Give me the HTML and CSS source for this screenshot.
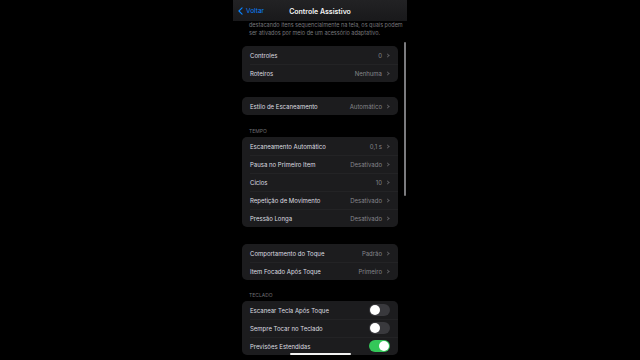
FILE: index.html
```html
<!DOCTYPE html>
<html lang="pt-BR">
  <head>
    <meta charset="UTF-8" />
    <meta name="viewport" content="width=device-width, initial-scale=1.0" />
    <title>Controle Assistivo</title>
    <link rel="stylesheet" href="styles.css">
  </head>
  <body>
    <div class="phone">
      <div class="navbar">
        <a class="back">
          <svg class="back-icon" viewBox="0 0 6 10" width="5" height="8">
            <path d="M5 1 L1 5 L5 9" fill="none" stroke="#0a84ff" stroke-width="1.4" stroke-linecap="round" stroke-linejoin="round" />
          </svg>
          Voltar
        </a>
        <div class="title">Controle Assistivo</div>
      </div>

      <div class="content">
        <p class="intro">
          destacando itens sequencialmente na tela, os quais podem<br />
          ser ativados por meio de um acessório adaptativo.
        </p>

        <div class="card first">
          <div class="row"><span class="label">Controles</span><span class="value">0</span><span class="chev"></span></div>
          <div class="row"><span class="label">Roteiros</span><span class="value">Nenhuma</span><span class="chev"></span></div>
        </div>

        <div class="card spaced">
          <div class="row"><span class="label">Estilo de Escaneamento</span><span class="value">Automático</span><span class="chev"></span></div>
        </div>

        <div class="section">TEMPO</div>
        <div class="card">
          <div class="row"><span class="label">Escaneamento Automático</span><span class="value">0,1 s</span><span class="chev"></span></div>
          <div class="row"><span class="label">Pausa no Primeiro Item</span><span class="value">Desativado</span><span class="chev"></span></div>
          <div class="row"><span class="label">Ciclos</span><span class="value">10</span><span class="chev"></span></div>
          <div class="row"><span class="label">Repetição de Movimento</span><span class="value">Desativado</span><span class="chev"></span></div>
          <div class="row"><span class="label">Pressão Longa</span><span class="value">Desativado</span><span class="chev"></span></div>
        </div>

        <div class="card spaced-lg">
          <div class="row"><span class="label">Comportamento do Toque</span><span class="value">Padrão</span><span class="chev"></span></div>
          <div class="row"><span class="label">Item Focado Após Toque</span><span class="value">Primeiro</span><span class="chev"></span></div>
        </div>

        <div class="section tight">TECLADO</div>
        <div class="card">
          <div class="row"><span class="label">Escanear Tecla Após Toque</span><span class="toggle"></span></div>
          <div class="row"><span class="label">Sempre Tocar no Teclado</span><span class="toggle"></span></div>
          <div class="row"><span class="label">Previsões Estendidas</span><span class="toggle on"></span></div>
        </div>
      </div>

      <div class="scroll-thumb"></div>
      <div class="home-bar"></div>
    </div>
  </body>
</html>
```

FILE: styles.css
```css
body {
  margin: 0;
  background: #000000;
  font-family: Inter, "Noto Sans", sans-serif;
  display: flex;
  justify-content: center;
  height: 360px;
  overflow: hidden;
}

.phone {
  position: relative;
  width: 174px;
  height: 360px;
  background: #000000;
  overflow: hidden;
}

.navbar {
  height: 21px;
  padding-top: 2px;
  box-sizing: border-box;
  display: flex;
  align-items: center;
  justify-content: center;
  position: relative;
  background: linear-gradient(#222224, #19191b);
}

.back {
  position: absolute;
  left: 5px;
  top: 7px;
  display: flex;
  align-items: center;
  gap: 3px;
  color: #0a84ff;
  font-size: 6.5px;
}

.title {
  color: #f2f2f2;
  font-size: 7px;
  font-weight: 600;
}

.content {
  padding: 0 9px;
}

.intro {
  margin: 0;
  padding: 1px 0 0 7px;
  font-size: 5.5px;
  line-height: 7.5px;
  color: #77777c;
  white-space: nowrap;
}

.card {
  background: #1c1c1e;
  border-radius: 5px;
  overflow: hidden;
}

.card.first {
  margin-top: 9px;
}

.card.spaced {
  margin-top: 15px;
}

.card.spaced-lg {
  margin-top: 17px;
}

.section {
  padding: 12px 7px 2px;
  font-size: 5px;
  line-height: 8px;
  color: #6e6e73;
}

.section.tight {
  padding-top: 11px;
}

.row {
  height: 18px;
  display: flex;
  align-items: center;
  padding: 0 8px;
  font-size: 6px;
  position: relative;
}

.row + .row::before {
  content: "";
  position: absolute;
  left: 8px;
  right: 0;
  top: 0;
  border-top: 0.5px solid #232325;
}

.label {
  flex: 1;
  color: #dedee0;
}

.value {
  color: #86868b;
}

.chev {
  width: 2px;
  height: 2px;
  margin-left: 4px;
  margin-right: 1px;
  border-top: 0.8px solid #5c5c60;
  border-right: 0.8px solid #5c5c60;
  transform: rotate(45deg);
}

.toggle {
  width: 21px;
  height: 12px;
  border-radius: 6px;
  background: #39393d;
  position: relative;
}

.toggle::after {
  content: "";
  position: absolute;
  top: 1px;
  left: 1px;
  width: 10px;
  height: 10px;
  border-radius: 50%;
  background: #ffffff;
}

.toggle.on {
  background: #34c759;
}

.toggle.on::after {
  left: 10px;
}

.scroll-thumb {
  position: absolute;
  right: 1px;
  top: 42px;
  width: 2px;
  height: 154px;
  border-radius: 1px;
  background: #7b7b7e;
}

.home-bar {
  position: absolute;
  left: 57px;
  bottom: 5px;
  width: 61px;
  height: 2.5px;
  border-radius: 2px;
  background: #f2f2f2;
}
```
